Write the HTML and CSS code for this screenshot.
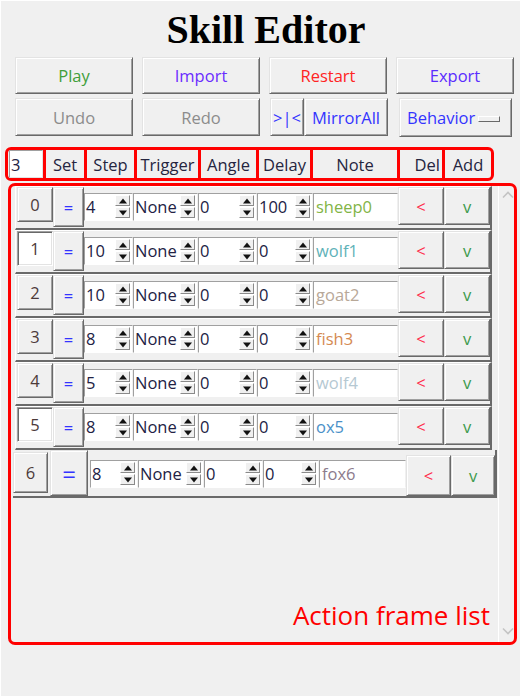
FILE: index.html
```html
<!DOCTYPE html>
<html>
<head>
<meta charset="utf-8">
<link rel="stylesheet" href="styles.css">
</head>
<body>
<div class="app">
  <h1 class="title">Skill Editor</h1>
  <div class="toolbar">
    <div class="btn c-play">Play</div>
    <div class="btn c-import">Import</div>
    <div class="btn c-restart">Restart</div>
    <div class="btn c-export">Export</div>
    <div class="btn c-gray">Undo</div>
    <div class="btn c-gray">Redo</div>
    <div class="split">
      <div class="btn c-blue mirror1">&gt;|&lt;</div>
      <div class="btn c-blue mirror2">MirrorAll</div>
    </div>
    <div class="btn c-blue menu"><span>Behavior</span><span class="ind"></span></div>
  </div>

  <div class="hdr">
    <div class="hentry"><span>3</span></div>
    <div class="hc w-set">Set</div>
    <div class="hc w-step">Step</div>
    <div class="hc w-trig">Trigger</div>
    <div class="hc w-angle">Angle</div>
    <div class="hc w-delay">Delay</div>
    <div class="hc w-note">Note</div>
    <div class="hc w-del">Del</div>
    <div class="hc w-add">Add</div>
  </div>

  <div class="list">
    <div class="rows">
      <div class="row">
        <div class="btn idx">0</div>
        <div class="btn eq">=</div>
        <div class="spin s-step"><span class="val">4</span><span class="arr"><i class="up"></i><i class="dn"></i></span></div>
        <div class="spin s-trig"><span class="val">None</span><span class="arr"><i class="up"></i><i class="dn"></i></span></div>
        <div class="spin s-angle"><span class="val">0</span><span class="arr"><i class="up"></i><i class="dn"></i></span></div>
        <div class="spin s-delay"><span class="val">100</span><span class="arr"><i class="up"></i><i class="dn"></i></span></div>
        <div class="note n-sheep">sheep0</div>
        <div class="btn act lt">&lt;</div>
        <div class="btn act v">v</div>
      </div>
      <div class="row">
        <div class="btn idx sel">1</div>
        <div class="btn eq">=</div>
        <div class="spin s-step"><span class="val">10</span><span class="arr"><i class="up"></i><i class="dn"></i></span></div>
        <div class="spin s-trig"><span class="val">None</span><span class="arr"><i class="up"></i><i class="dn"></i></span></div>
        <div class="spin s-angle"><span class="val">0</span><span class="arr"><i class="up"></i><i class="dn"></i></span></div>
        <div class="spin s-delay"><span class="val">0</span><span class="arr"><i class="up"></i><i class="dn"></i></span></div>
        <div class="note n-wolf1">wolf1</div>
        <div class="btn act lt">&lt;</div>
        <div class="btn act v">v</div>
      </div>
      <div class="row">
        <div class="btn idx">2</div>
        <div class="btn eq">=</div>
        <div class="spin s-step"><span class="val">10</span><span class="arr"><i class="up"></i><i class="dn"></i></span></div>
        <div class="spin s-trig"><span class="val">None</span><span class="arr"><i class="up"></i><i class="dn"></i></span></div>
        <div class="spin s-angle"><span class="val">0</span><span class="arr"><i class="up"></i><i class="dn"></i></span></div>
        <div class="spin s-delay"><span class="val">0</span><span class="arr"><i class="up"></i><i class="dn"></i></span></div>
        <div class="note n-goat">goat2</div>
        <div class="btn act lt">&lt;</div>
        <div class="btn act v">v</div>
      </div>
      <div class="row">
        <div class="btn idx">3</div>
        <div class="btn eq">=</div>
        <div class="spin s-step"><span class="val">8</span><span class="arr"><i class="up"></i><i class="dn"></i></span></div>
        <div class="spin s-trig"><span class="val">None</span><span class="arr"><i class="up"></i><i class="dn"></i></span></div>
        <div class="spin s-angle"><span class="val">0</span><span class="arr"><i class="up"></i><i class="dn"></i></span></div>
        <div class="spin s-delay"><span class="val">0</span><span class="arr"><i class="up"></i><i class="dn"></i></span></div>
        <div class="note n-fish">fish3</div>
        <div class="btn act lt">&lt;</div>
        <div class="btn act v">v</div>
      </div>
      <div class="row">
        <div class="btn idx">4</div>
        <div class="btn eq">=</div>
        <div class="spin s-step"><span class="val">5</span><span class="arr"><i class="up"></i><i class="dn"></i></span></div>
        <div class="spin s-trig"><span class="val">None</span><span class="arr"><i class="up"></i><i class="dn"></i></span></div>
        <div class="spin s-angle"><span class="val">0</span><span class="arr"><i class="up"></i><i class="dn"></i></span></div>
        <div class="spin s-delay"><span class="val">0</span><span class="arr"><i class="up"></i><i class="dn"></i></span></div>
        <div class="note n-wolf4">wolf4</div>
        <div class="btn act lt">&lt;</div>
        <div class="btn act v">v</div>
      </div>
      <div class="row">
        <div class="btn idx sel">5</div>
        <div class="btn eq">=</div>
        <div class="spin s-step"><span class="val">8</span><span class="arr"><i class="up"></i><i class="dn"></i></span></div>
        <div class="spin s-trig"><span class="val">None</span><span class="arr"><i class="up"></i><i class="dn"></i></span></div>
        <div class="spin s-angle"><span class="val">0</span><span class="arr"><i class="up"></i><i class="dn"></i></span></div>
        <div class="spin s-delay"><span class="val">0</span><span class="arr"><i class="up"></i><i class="dn"></i></span></div>
        <div class="note n-ox">ox5</div>
        <div class="btn act lt">&lt;</div>
        <div class="btn act v">v</div>
      </div>
      <div class="row big">
        <div class="btn idx">6</div>
        <div class="btn eq">=</div>
        <div class="spin s-step"><span class="val">8</span><span class="arr"><i class="up"></i><i class="dn"></i></span></div>
        <div class="spin s-trig"><span class="val">None</span><span class="arr"><i class="up"></i><i class="dn"></i></span></div>
        <div class="spin s-angle"><span class="val">0</span><span class="arr"><i class="up"></i><i class="dn"></i></span></div>
        <div class="spin s-delay"><span class="val">0</span><span class="arr"><i class="up"></i><i class="dn"></i></span></div>
        <div class="note n-fox">fox6</div>
        <div class="btn act lt">&lt;</div>
        <div class="btn act v">v</div>
      </div>
    </div>
    <div class="scroll">
      <svg class="chev" width="12" height="8" viewBox="0 0 12 8"><path d="M1 6.5 L6 1.5 L11 6.5" fill="none" stroke="#c4c4c4" stroke-width="1.6"/></svg>
      <svg class="chev" width="12" height="8" viewBox="0 0 12 8"><path d="M1 1.5 L6 6.5 L11 1.5" fill="none" stroke="#c4c4c4" stroke-width="1.6"/></svg>
    </div>
    <div class="annot">Action frame list</div>
  </div>
</div>
</body>
</html>
```

FILE: styles.css
```css
html, body {
  margin: 0;
  padding: 0;
}
body {
  background: #f0f0f0;
  width: 520px;
  height: 696px;
  overflow: hidden;
  box-shadow: inset 1px 1px 0 #ffffff;
  font-family: "Open Sans", "Noto Sans", sans-serif;
  font-size: 16.5px;
}
.app {
  height: 696px;
}
.title {
  margin: 0;
  width: 520px;
  height: 57px;
  box-sizing: border-box;
  padding: 7px 0 0 12px;
  text-align: center;
  font: bold 40px/46px "Liberation Serif", serif;
  color: #000;
}

/* generic raised Tk button */
.btn {
  box-sizing: border-box;
  display: flex;
  align-items: center;
  justify-content: center;
  background: #f0f0f0;
  border: 1px solid;
  border-color: #e3e3e3 #696969 #696969 #e3e3e3;
  box-shadow: inset 1px 1px 0 #ffffff, inset -1px -1px 0 #a0a0a0;
  white-space: nowrap;
}

.toolbar {
  display: grid;
  grid-template-columns: repeat(4, 118px);
  grid-template-rows: 37px 38px;
  column-gap: 9px;
  row-gap: 4px;
  margin-left: 15px;
}
.c-play { color: #3f9e3a; }
.c-import { color: #6a2cff; }
.c-restart { color: #ff2323; }
.c-export { color: #5a2cff; }
.c-gray { color: #8c8c8c; }
.c-blue { color: #3434ff; }
.split {
  display: flex;
}
.mirror1 {
  width: 34px;
  margin-left: 1px;
}
.mirror2 {
  flex: 1;
  margin-right: -1px;
}
.menu {
  margin: 0 2px 0 3px;
  height: 39px;
  justify-content: space-between;
  padding: 0 11px 0 7px;
}
.ind {
  width: 20px;
  height: 4px;
  background: #f0f0f0;
  border: 1px solid;
  border-color: #ffffff #696969 #696969 #ffffff;
  margin-top: 2px;
}

/* header row */
.hdr {
  margin: 11px 0 0 5px;
  width: 489px;
  height: 34px;
  box-sizing: border-box;
  border: 3px solid #ff0000;
  border-radius: 6px;
  display: flex;
  color: #252540;
}
.hentry {
  width: 34px;
  margin-left: 1px;
  box-sizing: border-box;
  background: #ffffff;
  border: 1px solid;
  border-color: #a0a0a0 #e3e3e3 #e3e3e3 #a0a0a0;
  display: flex;
  align-items: center;
  padding-left: 1px;
  color: #222244;
}
.hc {
  border-left: 3px solid #ff0000;
  display: flex;
  align-items: center;
  justify-content: center;
}
.w-set { width: 38px; }
.w-step { width: 47px; }
.w-trig { width: 61px; }
.w-angle { width: 55px; }
.w-delay { width: 51px; }
.w-note { width: 84px; }
.w-del { width: 42px; justify-content: flex-end; padding-right: 2px; box-sizing: content-box; width: 40px; }
.w-add { width: 46px; }

/* list */
.list {
  position: relative;
  margin: 2px 0 0 8px;
  width: 509px;
  height: 462px;
  box-sizing: border-box;
  border: 3px solid #ff0000;
  border-radius: 7px;
  display: flex;
}
.rows {
  flex: 1;
  padding-left: 4px;
}
.row {
  display: flex;
  align-items: flex-start;
  width: 477px;
  height: 44px;
  box-sizing: border-box;
  border-style: solid;
  border-width: 1px 2px 2px 1px;
  border-color: #ffffff #6a6a6a #6a6a6a #ffffff;
}
.idx {
  width: 36px;
  height: 35px;
  margin-left: 1px;
  color: #4c3a3a;
}
.idx.sel {
  background: #ffffff;
  border-color: #a0a0a0 #ffffff #ffffff #a0a0a0;
  box-shadow: inset 1px 1px 0 #696969, inset -1px -1px 0 #e3e3e3;
}
.eq {
  width: 31px;
  height: 40px;
  color: #3434ff;
}
.spin {
  display: flex;
  height: 28px;
  margin-top: 6px;
  box-sizing: border-box;
  background: #ffffff;
  border: 1px solid;
  border-color: #a0a0a0 #f0f0f0 #ffffff #a0a0a0;
  color: #222244;
}
.s-step { width: 49px; }
.s-trig { width: 65px; }
.s-angle { width: 59px; }
.s-delay { width: 56px; }
.val {
  flex: 1;
  padding-left: 1px;
  line-height: 26px;
  overflow: hidden;
  white-space: nowrap;
}
.arr {
  width: 15px;
  margin: 1px 2px 2px 0;
  display: flex;
  flex-direction: column;
  gap: 1px;
}
.arr i {
  flex: 1;
  position: relative;
  background: #f0f0f0;
  box-sizing: border-box;
  border: 1px solid;
  border-color: #ffffff #8a8a8a #8a8a8a #ffffff;
}
.arr i::after {
  content: "";
  position: absolute;
  left: 50%;
  top: 50%;
  width: 0;
  height: 0;
  border-left: 4px solid transparent;
  border-right: 4px solid transparent;
  transform: translate(-50%, -50%);
}
.arr .up::after {
  border-bottom: 5px solid #111;
}
.arr .dn::after {
  border-top: 5px solid #111;
}
.note {
  width: 85px;
  height: 28px;
  margin-top: 6px;
  box-sizing: border-box;
  background: #ffffff;
  border: 1px solid;
  border-color: #a0a0a0 #f0f0f0 #ffffff #a0a0a0;
  padding-left: 2px;
  line-height: 26px;
}
.n-sheep { color: #82b446; }
.n-wolf1 { color: #5fb2b8; }
.n-goat { color: #b8a898; }
.n-fish { color: #d58a52; }
.n-wolf4 { color: #b5c8d2; }
.n-ox { color: #4a90c8; }
.n-fox { color: #8c7b8c; }
.act {
  width: 46px;
  height: 38px;
}
.lt { color: #ff2d4d; }
.v { color: #3c9a4c; }

/* last (wider) row */
.row.big {
  width: 484px;
  height: 48px;
  margin-left: -2px;
  border-width: 0 2px 2px 0;
}
.big .idx {
  width: 35px;
  height: 41px;
  margin: 2px 0 0 0;
}
.big .eq {
  width: 38px;
  height: 46px;
  margin-left: 2px;
  font-size: 24px;
}
.big .spin {
  margin-top: 10px;
}
.big .s-step { width: 48px; margin-left: 2px; }
.big .s-trig { width: 66px; }
.big .note { width: 87px; margin-top: 10px; }
.big .act { height: 41px; margin-top: 5px; width: 45px; }
.big .v { width: 44px; }

.scroll {
  width: 15px;
  border-left: 1px solid #ffffff;
  display: flex;
  flex-direction: column;
  justify-content: space-between;
  align-items: center;
  padding: 5px 0 7px;
}
.chev {
  display: block;
  margin-left: 2px;
}
.annot {
  position: absolute;
  right: 24px;
  bottom: 14px;
  font-family: "Open Sans", "Noto Sans", sans-serif;
  font-size: 26px;
  line-height: 26px;
  color: #ff0000;
}
```
